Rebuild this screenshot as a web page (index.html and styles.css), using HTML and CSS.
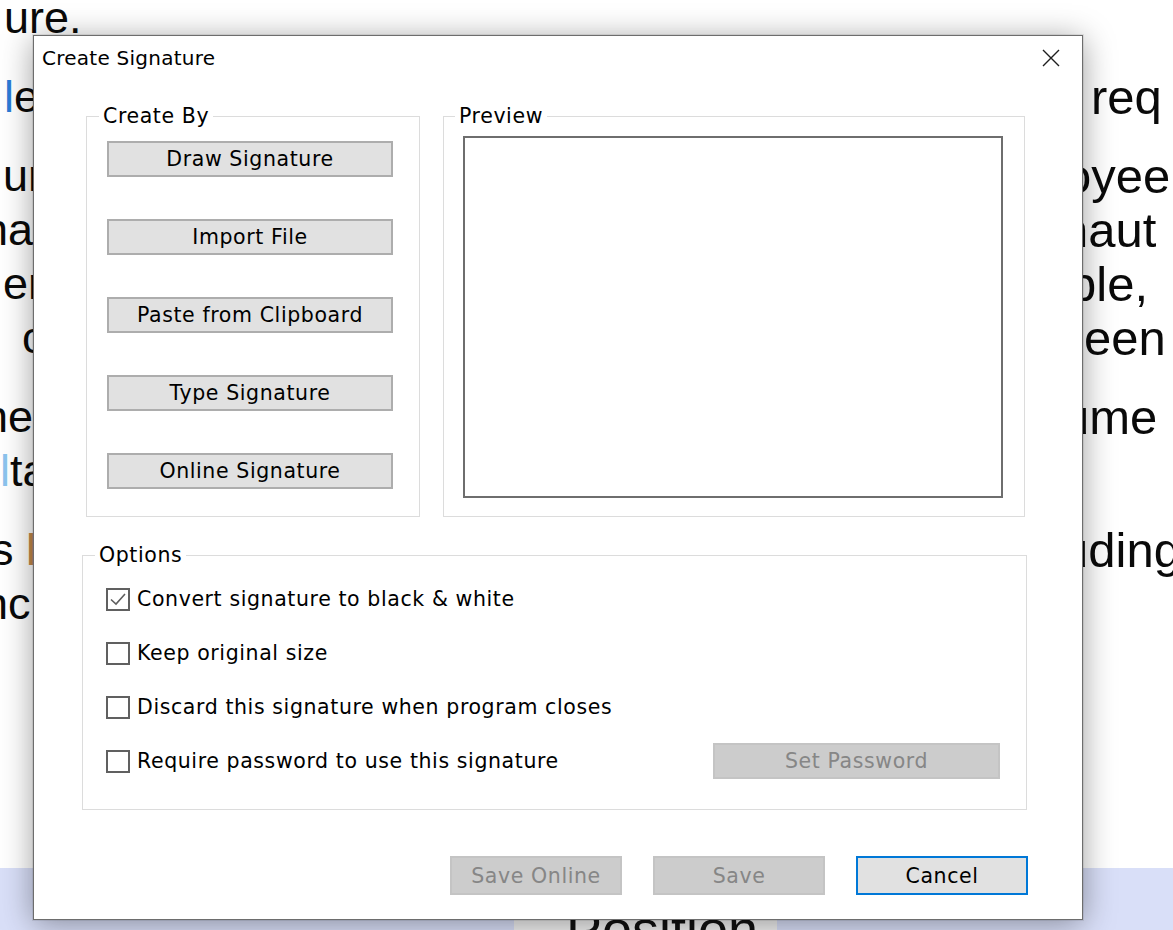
FILE: index.html
```html
<!DOCTYPE html>
<html lang="en">
<head>
<meta charset="utf-8">
<title>Create Signature</title>
<link rel="stylesheet" href="styles.css">
</head>
<body>
<div class="doc">
  <div class="para">
    <div class="line"><span class="l ind-u">ure.</span><span class="r"></span></div>
  </div>
  <div class="para">
    <div class="line"><span class="l ind-u"><span class="lnk">l</span>e</span><span class="r ind-req">req</span></div>
  </div>
  <div class="para">
    <div class="line"><span class="l ind-ur">ur</span><span class="r ind-oyee">oyee</span></div>
    <div class="line"><span class="l ind-n">na</span><span class="r ind-naut">naut</span></div>
    <div class="line"><span class="l ind-e">er</span><span class="r ind-ble">ble,</span></div>
    <div class="line"><span class="l ind-c">c</span><span class="r ind-een">een</span></div>
  </div>
  <div class="para">
    <div class="line"><span class="l ind-n">ne</span><span class="r ind-ume">ume</span></div>
    <div class="line"><span class="l ind-0"><span class="lnk-light">l</span>ta</span><span class="r"></span></div>
  </div>
  <div class="para">
    <div class="line"><span class="l ind-s">s <span class="mark">l</span></span><span class="r ind-ding">uding</span></div>
    <div class="line"><span class="l ind-n">nc</span><span class="r"></span></div>
  </div>
  <div class="band">
    <div class="band-side"></div>
    <div class="band-cell">Position</div>
    <div class="band-rest"></div>
  </div>
</div>

<div class="dialog" role="dialog" aria-label="Create Signature">
  <div class="titlebar">
    <span class="title">Create Signature</span>
    <button class="close" aria-label="Close">
      <svg width="18" height="18" viewBox="0 0 18 18"><path d="M1 1 L17 17 M17 1 L1 17" stroke="#1e1e1e" stroke-width="1.4" fill="none"/></svg>
    </button>
  </div>
  <div class="dialog-body">
    <div class="top-row">
      <section class="group group-create">
        <div class="group-label">Create By</div>
        <div class="create-list">
          <button class="btn btn-create">Draw Signature</button>
          <button class="btn btn-create">Import File</button>
          <button class="btn btn-create">Paste from Clipboard</button>
          <button class="btn btn-create">Type Signature</button>
          <button class="btn btn-create">Online Signature</button>
        </div>
      </section>
      <section class="group group-preview">
        <div class="group-label">Preview</div>
        <div class="preview-box"></div>
      </section>
    </div>

    <section class="group group-options">
      <div class="group-label">Options</div>
      <div class="option-list">
        <label class="option">
          <span class="check"><svg width="20" height="19" viewBox="0 0 20 19"><path d="M3 9.5 L8 14 L17 4" stroke="#5e5e5e" stroke-width="1.6" fill="none"/></svg></span>
          Convert signature to black &amp; white
        </label>
        <label class="option"><span class="check"></span>Keep original size</label>
        <label class="option"><span class="check"></span>Discard this signature when program closes</label>
        <div class="option option-last">
          <label class="option-text"><span class="check"></span>Require password to use this signature</label>
          <button class="btn btn-disabled btn-pass">Set Password</button>
        </div>
      </div>
    </section>

    <div class="actions">
      <button class="btn btn-disabled btn-action">Save Online</button>
      <button class="btn btn-disabled btn-action">Save</button>
      <button class="btn btn-action btn-default">Cancel</button>
    </div>
  </div>
</div>
</body>
</html>
```

FILE: styles.css
```css
html, body {
  margin: 0;
  padding: 0;
}

body {
  width: 1173px;
  height: 930px;
  overflow: hidden;
  position: relative;
  background: #ffffff;
}

/* document underneath the dialog */
.doc {
  margin-top: -9px;
  font-family: "Liberation Sans", Arial, sans-serif;
  font-size: 45px;
  color: #0a0a0a;
}

.para {
  margin: 0 0 25px;
}

.line {
  display: grid;
  grid-template-columns: 1083px auto;
  height: 54px;
  line-height: 54px;
  white-space: nowrap;
}

.l, .r {
  display: block;
}

.r {
  font-size: 49px;
}

.ind-u { text-indent: 4px; }
.ind-ur { text-indent: 3px; }
.ind-n { text-indent: -17px; }
.ind-e { text-indent: 3px; }
.ind-c { text-indent: 22px; }
.ind-0 { text-indent: 0; }
.ind-s { text-indent: -9px; }

.ind-req { text-indent: 8px; }
.ind-oyee { text-indent: -19px; }
.ind-naut { text-indent: -22px; }
.ind-ble { text-indent: -14px; }
.ind-een { text-indent: 1px; }
.ind-ume { text-indent: -21px; }
.ind-ding { text-indent: -22px; }

.lnk { color: #2b7bd6; }
.lnk-light { color: #8cc4ee; }
.mark { color: #c48a48; }

.band {
  margin-top: 237px;
  display: flex;
  height: 90px;
  background: #d9dff8;
}

.band-side {
  width: 514px;
}

.band-cell {
  width: 263px;
  background: #f1f1f1;
  box-sizing: border-box;
  padding: 30px 0 0 52px;
  font-size: 54px;
  line-height: 62px;
  color: #111;
}

.band-rest {
  flex: 1;
}

/* dialog window */
.dialog {
  position: absolute;
  left: 33px;
  top: 35px;
  width: 1050px;
  height: 885px;
  box-sizing: border-box;
  background: #ffffff;
  border: 1px solid #6d6d6d;
  box-shadow: 0 0 0 1px rgba(0, 0, 0, 0.08), 0 4px 30px rgba(0, 0, 0, 0.38);
  font-family: "DejaVu Sans", Verdana, sans-serif;
  font-size: 20.5px;
  letter-spacing: 0.6px;
  color: #000;
}

.titlebar {
  height: 44px;
  display: flex;
  align-items: center;
  justify-content: space-between;
  padding-left: 8px;
}

.title {
  font-size: 20px;
  letter-spacing: 0.25px;
  line-height: 22px;
}

.close {
  width: 18px;
  height: 18px;
  margin-right: 22px;
  padding: 0;
  border: 0;
  background: none;
  display: flex;
}

.dialog-body {
  padding-top: 25px;
}

.top-row {
  display: flex;
  align-items: flex-start;
}

.group {
  margin-top: 11px;
  border: 1px solid #dcdcdc;
  box-sizing: border-box;
}

.group-label {
  width: fit-content;
  margin: -12px 0 0 12px;
  padding: 0 4px;
  height: 22px;
  line-height: 22px;
  background: #ffffff;
}

.group-create {
  margin-left: 52px;
  width: 334px;
  height: 401px;
}

.create-list {
  margin-top: 14px;
  padding-left: 20px;
  display: flex;
  flex-direction: column;
  gap: 42px;
}

.btn {
  font: inherit;
  letter-spacing: inherit;
  color: #000;
  background: #e1e1e1;
  border: 2px solid #adadad;
  padding: 0;
  box-sizing: border-box;
}

.btn-create {
  width: 286px;
  height: 36px;
}

.group-preview {
  margin-left: 23px;
  width: 582px;
  height: 401px;
}

.group-preview .group-label {
  margin-left: 11px;
}

.preview-box {
  margin: 9px 0 0 19px;
  width: 540px;
  height: 362px;
  box-sizing: border-box;
  border: 2px solid #6e6e6e;
}

.group-options {
  margin-top: 38px;
  margin-left: 48px;
  width: 945px;
  height: 255px;
}

.option-list {
  margin-top: 15px;
  padding-left: 23px;
  display: flex;
  flex-direction: column;
  gap: 18px;
}

.option,
.option-text {
  height: 36px;
  display: flex;
  align-items: center;
}

.option-last {
  justify-content: space-between;
  padding-right: 26px;
}

.check {
  width: 24px;
  height: 23px;
  box-sizing: border-box;
  border: 2px solid #606060;
  margin-right: 7px;
  display: flex;
  align-items: center;
  justify-content: center;
  flex: none;
}

.btn-disabled {
  background: #cccccc;
  border-color: #c4c4c4;
  color: #868686;
}

.btn-pass {
  width: 287px;
  height: 36px;
}

.actions {
  margin-top: 46px;
  padding-right: 54px;
  display: flex;
  justify-content: flex-end;
  gap: 31px;
}

.btn-action {
  width: 172px;
  height: 39px;
}

.btn-default {
  border: 2px solid #0078d7;
}
```
